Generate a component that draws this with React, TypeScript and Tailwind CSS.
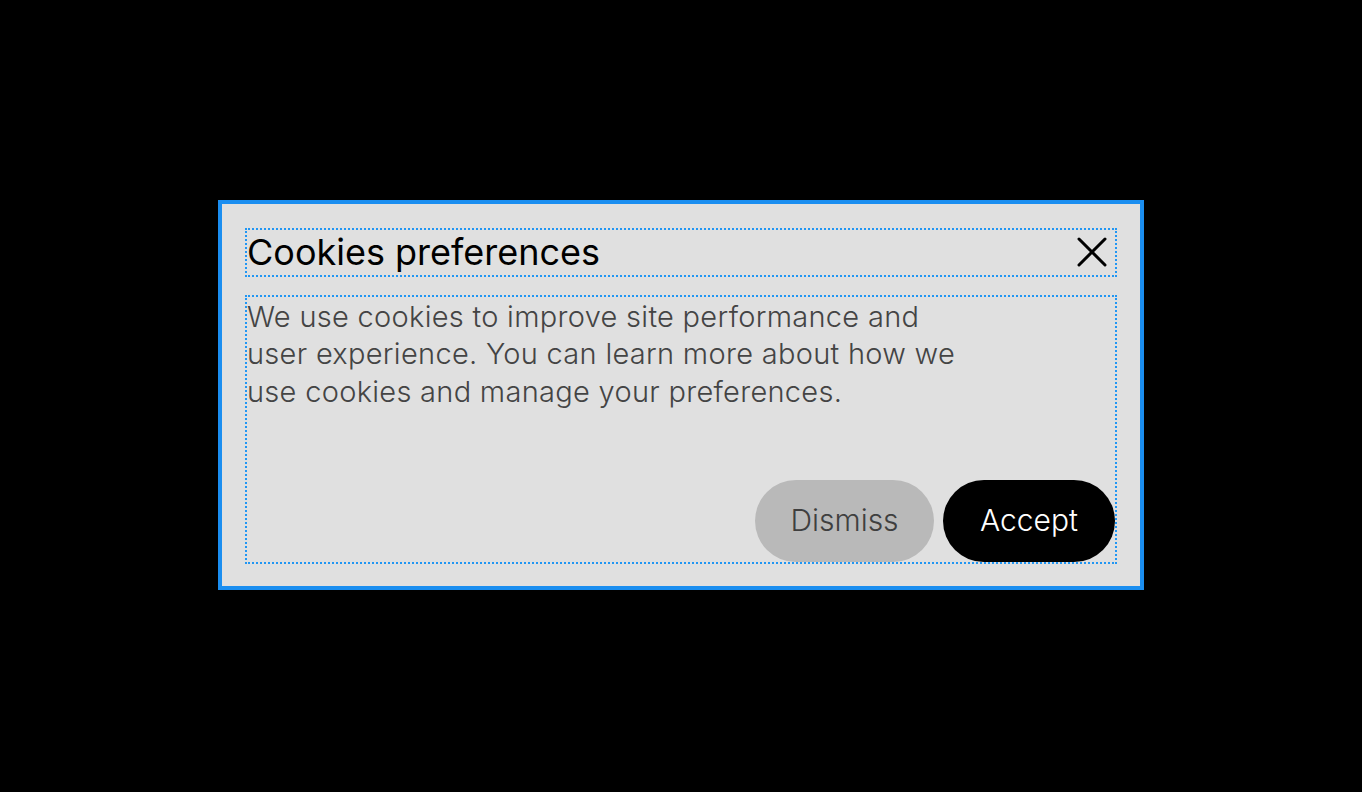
export default function App() {
  return (
    <div
      className="flex h-screen w-full items-center justify-center bg-black pb-[3px]"
      style={{ fontFamily: "Inter, 'Noto Sans', sans-serif" }}
    >
      <div className="flex w-[926px] flex-col border-4 border-[#1b8ef0] bg-[#e0e0e0] pt-[26px] pb-[24px] px-[25px]">
        <div className="flex h-[45px] items-center justify-between outline-2 outline-dotted outline-[#2196f3]">
          <h1 className="text-[36px] leading-none text-black">Cookies preferences</h1>
          <button className="flex h-[45px] w-[45px] items-center justify-center mr-[1px]">
            <svg width="30" height="30" viewBox="0 0 30 30" fill="none" stroke="black" strokeWidth="3" strokeLinecap="round">
              <path d="M2 2L28 28M28 2L2 28" />
            </svg>
          </button>
        </div>
        <div className="mt-[22px] flex h-[265px] flex-col justify-between outline-2 outline-dotted outline-[#2196f3]">
          <p className="max-w-[720px] pt-[1px] text-[29px] font-light leading-[37.5px] tracking-[0.01em] text-[#444]">
            We use cookies to improve site performance and user experience. You can learn more about how we use cookies and manage your preferences.
          </p>
          <div className="flex justify-end gap-[9px]">
            <button className="h-[82px] w-[179px] rounded-full bg-[#b9b9b9] text-[30px] font-light text-[#3f3f3f]">Dismiss</button>
            <button className="h-[82px] w-[172px] rounded-full bg-black text-[30px] font-light text-white">Accept</button>
          </div>
        </div>
      </div>
    </div>
  );
}
